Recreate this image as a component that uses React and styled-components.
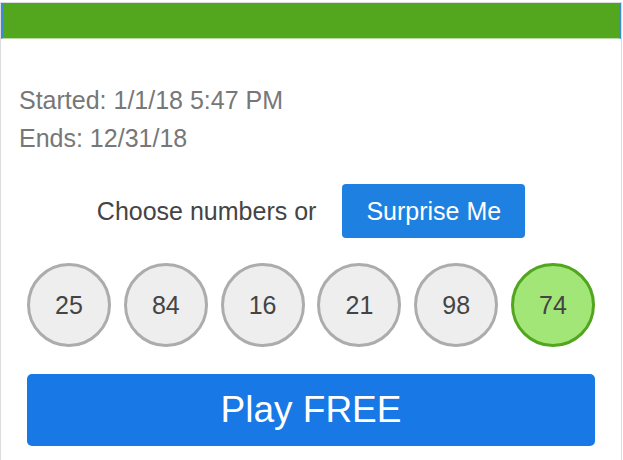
import React from 'react';
import styled, { createGlobalStyle } from 'styled-components';

const GlobalStyle = createGlobalStyle`
  html, body {
    margin: 0;
    padding: 0;
    background: #fff;
    font-family: "Liberation Sans", Arial, sans-serif;
  }
`;

const Card = styled.div`
  box-sizing: border-box;
  width: 622px;
  margin-top: 2px;
  border: 1px solid #dcdcdc;
  border-bottom: none;
  background: #fff;
  padding-bottom: 20px;
`;

const Header = styled.div`
  height: 35px;
  background: #53a71f;
  border-left: 2px solid #3d8ad8;
  border-right: 2px solid #3d8ad8;
  border-bottom: 1px solid #b8dba3;
`;

const Info = styled.div`
  padding: 42px 18px 0;
  color: #777;
  font-size: 25px;
  line-height: 38px;
`;

const Line = styled.div``;

const ChooseRow = styled.div`
  display: flex;
  align-items: center;
  justify-content: center;
  gap: 26px;
  margin-top: 27px;
`;

const ChooseText = styled.span`
  color: #444;
  font-size: 25px;
`;

const Button = styled.button`
  border: none;
  border-radius: ${(p) => (p.$big ? '5px' : '4px')};
  background: ${(p) => (p.$big ? '#1778e6' : '#1e80e1')};
  color: #fff;
  font-family: "Liberation Sans", Arial, sans-serif;
  font-size: ${(p) => (p.$big ? '37px' : '25px')};
  cursor: pointer;
`;

const SurpriseButton = styled(Button)`
  height: 54px;
  padding: 0 24px;
`;

const Balls = styled.div`
  display: flex;
  justify-content: space-between;
  padding: 0 26px;
  margin-top: 25px;
`;

const Ball = styled.div`
  box-sizing: border-box;
  width: 84px;
  height: 84px;
  border-radius: 50%;
  border: 3px solid ${(p) => (p.$picked ? '#52a51e' : '#acacac')};
  background: ${(p) => (p.$picked ? '#a2e678' : '#eeeeee')};
  display: flex;
  align-items: center;
  justify-content: center;
  color: #444;
  font-size: 25px;
`;

const PlayButton = styled(Button)`
  display: block;
  box-sizing: border-box;
  width: 568px;
  height: 72px;
  margin: 27px 0 0 26px;
`;

const numbers = [25, 84, 16, 21, 98, 74];

export default function App() {
  return (
    <>
      <GlobalStyle />
      <Card>
        <Header />
        <Info>
          <Line>Started: 1/1/18 5:47 PM</Line>
          <Line>Ends: 12/31/18</Line>
        </Info>
        <ChooseRow>
          <ChooseText>Choose numbers or</ChooseText>
          <SurpriseButton>Surprise Me</SurpriseButton>
        </ChooseRow>
        <Balls>
          {numbers.map((n, i) => (
            <Ball key={n} $picked={i === numbers.length - 1}>
              {n}
            </Ball>
          ))}
        </Balls>
        <PlayButton $big>Play FREE</PlayButton>
      </Card>
    </>
  );
}
